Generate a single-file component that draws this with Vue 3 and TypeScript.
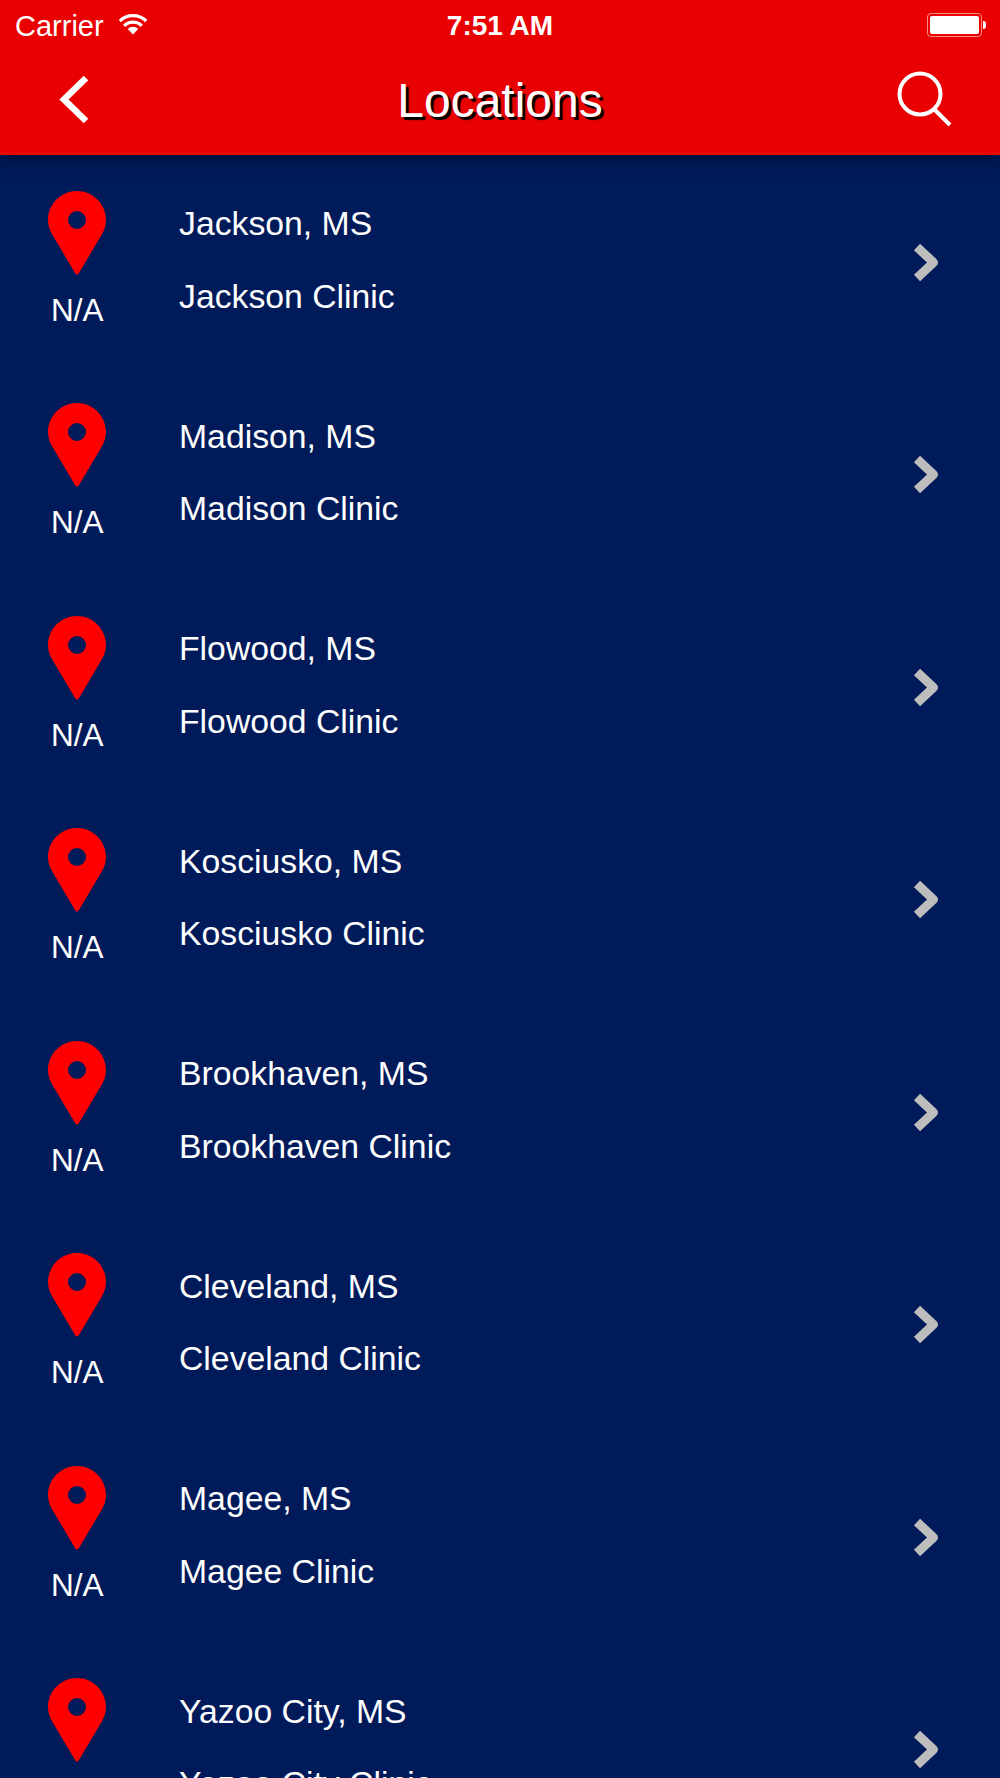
<script setup lang="ts">
const places: string[] = ['Jackson', 'Madison', 'Flowood', 'Kosciusko', 'Brookhaven', 'Cleveland', 'Magee', 'Yazoo City']
</script>

<template>
  <div class="screen">
    <header class="top">
      <div class="status">
        <div class="status-left">
          <span>Carrier</span>
          <svg class="wifi" width="30" height="22" viewBox="0 0 30 22">
            <path d="M15 21.5 9.800 16a7.400 7.400 0 0 1 10.400 0Z" fill="#fff" />
            <path d="M6.200 12.800a12.500 12.500 0 0 1 17.600 0" fill="none" stroke="#fff" stroke-width="3.200" />
            <path d="M1.800 8a18.800 18.800 0 0 1 26.400 0" fill="none" stroke="#fff" stroke-width="3.200" />
          </svg>
        </div>
        <div class="time">7:51 AM</div>
        <div class="status-right">
          <div class="battery"><div class="charge"></div></div>
          <div class="nub"></div>
        </div>
      </div>
      <div class="nav">
        <svg class="back" width="40" height="56" viewBox="0 0 40 56">
          <path d="M32 6 10 27.500 32 49" fill="none" stroke="#fff" stroke-width="6.500" />
        </svg>
        <h1 class="title">Locations</h1>
        <svg class="search" width="62" height="62" viewBox="0 0 62 62">
          <circle cx="26" cy="24" r="20.500" fill="none" stroke="#fff" stroke-width="4" />
          <path d="M40.500 39.500 56 55" fill="none" stroke="#fff" stroke-width="4" />
        </svg>
      </div>
    </header>
    <main class="list">
      <div v-for="place in places" :key="place" class="row">
        <div class="marker">
          <svg class="pin" width="58" height="84" viewBox="0 0 58 84">
            <path fill="#fe0000" fill-rule="evenodd" d="M29 0C13 0 0 13 0 29C0 35 2 40 4.500 44L27 82Q29 85 31 82L53.500 44C56 40 58 35 58 29C58 13 45 0 29 0ZM29 20a9 9 0 1 1 0 18 9 9 0 0 1 0-18Z" />
          </svg>
          <span class="distance">N/A</span>
        </div>
        <div class="names">
          <div class="line">{{ place }}, MS</div>
          <div class="line">{{ place }} Clinic</div>
        </div>
        <svg class="chevron" width="30" height="42" viewBox="0 0 30 42">
          <path d="M5 6 21.500 21.500 5 37" fill="none" stroke="#bdbdbd" stroke-width="9" stroke-linejoin="round" />
        </svg>
      </div>
    </main>
  </div>
</template>

<style scoped>
.screen {
  width: 1000px;
  height: 1778px;
  overflow: hidden;
  background: #001a5a;
  color: #fff;
  font-family: "Liberation Sans", Arial, sans-serif;
}
.top {
  height: 155px;
  background: #e90000;
  position: relative;
  z-index: 1;
  box-shadow: 0 2px 18px rgba(0, 0, 0, 0.5);
}
.status {
  height: 52px;
  display: grid;
  grid-template-columns: 1fr auto 1fr;
  align-items: center;
  font-size: 29px;
}
.status-left {
  display: flex;
  align-items: center;
  gap: 14px;
  padding-left: 15px;
}
.wifi {
  margin-top: -4px;
}
.time {
  font-size: 28px;
  font-weight: 700;
}
.status-right {
  display: flex;
  align-items: center;
  justify-content: flex-end;
  padding: 0 14px 2px 0;
}
.battery {
  width: 55px;
  height: 24px;
  box-sizing: border-box;
  border: 1px solid #ff8a8a;
  border-radius: 4px;
  padding: 2px;
}
.charge {
  height: 100%;
  background: #fff;
  border-radius: 2px;
}
.nub {
  width: 3px;
  height: 8px;
  margin-left: 1px;
  background: #fff;
  border-radius: 0 3px 3px 0;
}
.nav {
  height: 103px;
  display: grid;
  grid-template-columns: 1fr auto 1fr;
  align-items: center;
}
.back {
  margin-left: 54px;
  margin-top: -8px;
}
.title {
  margin: -6px 0 0;
  font-size: 48px;
  font-weight: 400;
  text-shadow: 3px 3px 1px #000;
}
.search {
  justify-self: end;
  margin-right: 44px;
  margin-top: -6px;
}
.row {
  height: 212.5px;
  display: flex;
  align-items: center;
}
.marker {
  width: 154.5px;
  margin-top: -3px;
  display: flex;
  flex-direction: column;
  align-items: center;
  gap: 17px;
  font-size: 31.500px;
  line-height: 37px;
}
.pin {
  display: block;
}
.names {
  flex: 1;
  margin: -3px 0 0 24.500px;
  font-size: 33.750px;
  line-height: 72.500px;
}
.chevron {
  margin: 1px 58.500px 0 0;
}
</style>

<style>
html,
body {
  margin: 0;
  background: #001a5a;
}
</style>
